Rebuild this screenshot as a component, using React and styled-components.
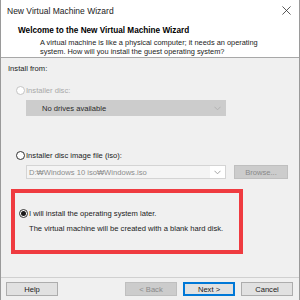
import React from "react";
import styled, { createGlobalStyle } from "styled-components";

const Global = createGlobalStyle`
  html, body { margin: 0; padding: 0; background: #ffffff; }
  #root { width: 300px; height: 300px; }
  * { box-sizing: border-box; }
`;

const Window = styled.div`
  width: 300px;
  height: 300px;
  display: flex;
  flex-direction: column;
  background: #f0f0f0;
  border-left: 1px solid #9a9a9a;
  border-right: 1px solid #9a9a9a;
  font-family: "Liberation Sans", Arial, sans-serif;
  font-size: 7.6px;
  color: #1a1a1a;
  overflow: hidden;
`;

const TitleBar = styled.div`
  height: 21px;
  background: #ffffff;
  display: flex;
  align-items: center;
  justify-content: space-between;
  padding: 0 6px 0 6px;
  font-size: 8.5px;
  color: #222;
`;

const CloseX = styled.svg`
  width: 9px;
  height: 9px;
  margin-right: 2px;
`;

const Header = styled.div`
  height: 36px;
  background: #ffffff;
  padding: 5px 0 0 17px;
  display: flex;
  flex-direction: column;
`;

const Heading = styled.div`
  font-weight: bold;
  font-size: 8.2px;
  line-height: 10px;
  color: #000;
`;

const Desc = styled.div`
  margin-top: 2px;
  padding-left: 22px;
  font-size: 7.4px;
  line-height: 9px;
  color: #222;
`;

const Divider = styled.div`
  height: 1px;
  background: ${(p) => p.$color || "#a0a0a0"};
`;

const Body = styled.div`
  flex: 1;
  display: flex;
  flex-direction: column;
  padding: 6px 0 0 7px;
`;

const Label = styled.div`
  line-height: 10px;
  color: #1a1a1a;
`;

const RadioRow = styled.div`
  display: flex;
  align-items: center;
  height: 12px;
  margin-top: ${(p) => p.$mt || 0}px;
  margin-left: ${(p) => p.$ml || 8}px;
  color: ${(p) => (p.$disabled ? "#a8a8a8" : "#1a1a1a")};
`;

const RadioCircle = styled.span`
  width: 9px;
  height: 9px;
  border-radius: 50%;
  border: 1px solid ${(p) => (p.$disabled ? "#c4c4c4" : "#333")};
  background: #fff;
  margin-right: 1px;
  display: flex;
  align-items: center;
  justify-content: center;
  flex: none;
`;

const Dot = styled.span`
  width: 5px;
  height: 5px;
  border-radius: 50%;
  background: #1a1a1a;
`;

const FieldRow = styled.div`
  display: flex;
  align-items: center;
  margin-top: ${(p) => p.$mt || 0}px;
  margin-left: 18px;
  gap: 8px;
`;

const Select = styled.div`
  width: 200px;
  height: ${(p) => p.$h || 16}px;
  display: flex;
  align-items: center;
  justify-content: space-between;
  padding: 0 ${(p) => p.$pr ?? 4}px 0 ${(p) => p.$pl || 15}px;
  background: ${(p) => p.$bg || "#cccccc"};
  border: 1px solid ${(p) => p.$border || "#cccccc"};
  color: ${(p) => p.$color || "#2a2a2a"};
`;

const Chevron = styled.svg`
  width: 7px;
  height: 5px;
  flex: none;
`;

const ChevronBox = styled.div`
  height: 100%;
  display: flex;
  align-items: center;
  padding: 0 4px;
  background: ${(p) => p.$bg || "transparent"};
`;

const Button = styled.div`
  width: ${(p) => p.$w || 52}px;
  height: 14px;
  display: flex;
  align-items: center;
  justify-content: center;
  background: ${(p) => (p.$disabled ? "#cccccc" : "#e1e1e1")};
  border: 1px solid
    ${(p) => (p.$primary ? "#0078d7" : p.$disabled ? "#bfbfbf" : "#adadad")};
  box-shadow: ${(p) => (p.$primary ? "inset 0 0 0 1px #0078d7" : "none")};
  color: ${(p) => (p.$disabled ? "#8a8a8a" : "#1a1a1a")};
`;

const Highlight = styled.div`
  width: 232px;
  height: 65px;
  margin-top: 10px;
  margin-left: 3px;
  border: 4px solid #ef3b40;
  display: flex;
  flex-direction: column;
  padding-top: 14px;
`;

const Note = styled.div`
  margin-left: 14px;
  margin-top: 5px;
  line-height: 10px;
  color: #1a1a1a;
`;

const Footer = styled.div`
  height: 22px;
  display: flex;
  align-items: flex-start;
  padding: 4px 6px 0 5px;
  gap: 6px;
`;

const Spacer = styled.div`
  flex: 1;
`;

const ChevronIcon = ({ color }) => (
  <Chevron viewBox="0 0 7 5">
    <path d="M0.5 0.8 L3.5 3.8 L6.5 0.8" fill="none" stroke={color} strokeWidth="0.9" />
  </Chevron>
);

export default function App() {
  return (
    <>
      <Global />
      <Window>
        <TitleBar>
          <span>New Virtual Machine Wizard</span>
          <CloseX viewBox="0 0 10 10">
            <path d="M0.5 0.5 L9.5 9.5 M9.5 0.5 L0.5 9.5" stroke="#333" strokeWidth="0.9" />
          </CloseX>
        </TitleBar>
        <Header>
          <Heading>Welcome to the New Virtual Machine Wizard</Heading>
          <Desc>
            A virtual machine is like a physical computer; it needs an operating
            <br />
            system. How will you install the guest operating system?
          </Desc>
        </Header>
        <Divider $color="#a8a8a8" />
        <Body>
          <Label>Install from:</Label>
          <RadioRow $mt={10} $disabled>
            <RadioCircle $disabled />
            Installer disc:
          </RadioRow>
          <FieldRow $mt={4}>
            <Select>
              <span>No drives available</span>
              <ChevronIcon color="#b0b0b0" />
            </Select>
          </FieldRow>
          <RadioRow $mt={33}>
            <RadioCircle />
            Installer disc image file (iso):
          </RadioRow>
          <FieldRow $mt={4}>
            <Select $h={14} $bg="#f4f4f4" $border="#d4d4d4" $color="#8c8c8c" $pl={2} $pr={0}>
              <span>D:₩Windows 10 iso₩Windows.iso</span>
              <ChevronBox $bg="#ffffff">
                <ChevronIcon color="#9a9a9a" />
              </ChevronBox>
            </Select>
            <Button $w={54} $disabled>
              Browse...
            </Button>
          </FieldRow>
          <Highlight>
            <RadioRow $ml={4}>
              <RadioCircle>
                <Dot />
              </RadioCircle>
              I will install the operating system later.
            </RadioRow>
            <Note>The virtual machine will be created with a blank hard disk.</Note>
          </Highlight>
        </Body>
        <Divider $color="#d0d0d0" />
        <Footer>
          <Button>Help</Button>
          <Spacer />
          <Button $disabled>&lt; Back</Button>
          <Button $primary>Next &gt;</Button>
          <Button>Cancel</Button>
        </Footer>
      </Window>
    </>
  );
}
